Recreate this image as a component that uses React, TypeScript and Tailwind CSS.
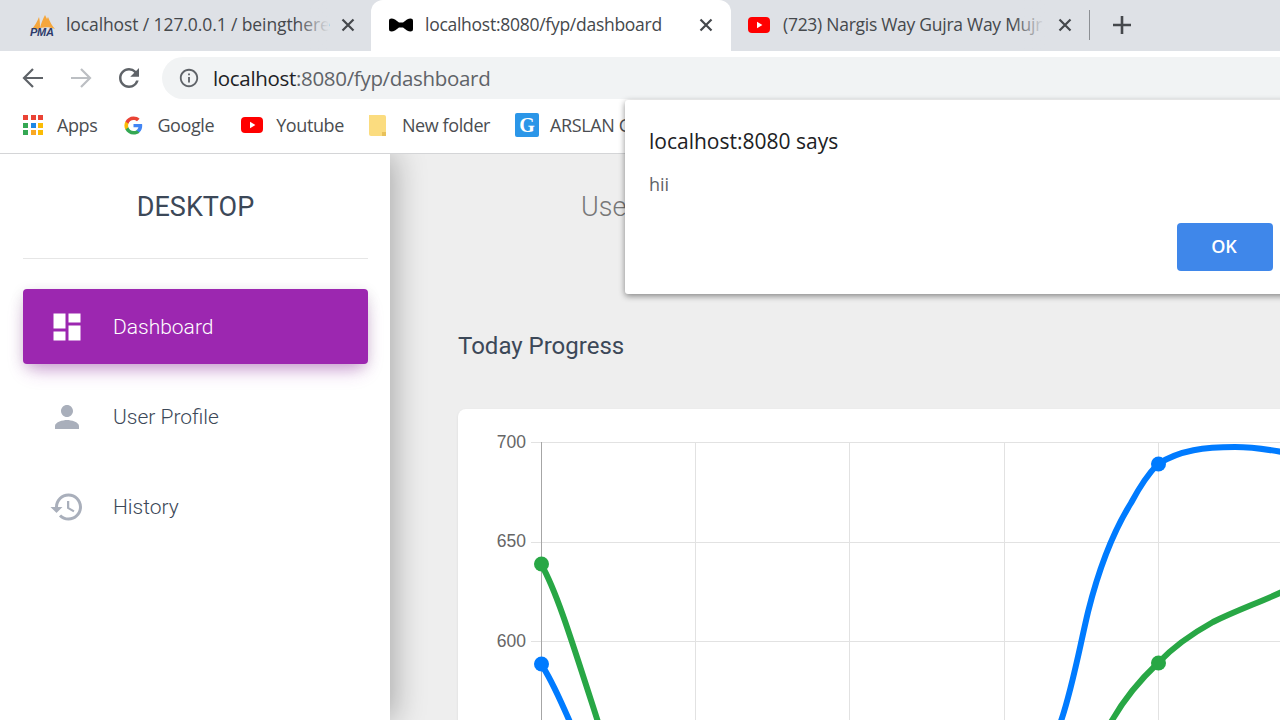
const UI = "font-['Open_Sans','Noto_Sans',sans-serif]";

const CloseIcon = () => (
  <svg width="14" height="14" viewBox="0 0 14 14" className="shrink-0">
    <path d="M1.500 1.500l11 11M12.500 1.500l-11 11" stroke="#45484c" strokeWidth="2.200" fill="none" />
  </svg>
);

const YoutubeIcon = () => (
  <svg width="22" height="16" viewBox="0 0 22 16" className="shrink-0">
    <rect width="22" height="16" rx="4" fill="#f00" />
    <path d="M9 4.800v6.400l5.400-3.200z" fill="#fff" />
  </svg>
);

const PmaIcon = () => (
  <div className="relative w-[26px] h-[22px] shrink-0">
    <svg width="26" height="16" viewBox="0 0 26 16" className="absolute top-0 left-0">
      <path d="M2 15C5 11 7 8 9 3c1 4 1 8 1 11l-2 1zM10 14c1-5 3-9 5-13l2 4 1-2c2 5 4 9 7 12-5-2-10-2-15-1z" fill="#f5a63c" />
    </svg>
    <span className="absolute left-0 bottom-[-2px] text-[11px] leading-none font-bold italic text-[#2d3a6b] font-['Liberation_Sans',sans-serif]">
      PMA
    </span>
  </div>
);

const BowTie = () => (
  <svg width="24" height="14" viewBox="0 0 24 14" className="shrink-0">
    <path d="M0 3C0 0 3 0 6 1.500L10 4.500h4L18 1.500C21 0 24 0 24 3v8c0 3-3 3-6 1.500L14 9.500h-4L6 12.500C3 14 0 14 0 11z" fill="#000" />
  </svg>
);

const AppsIcon = () => {
  const colors = ["#ea4335", "#ea4335", "#ea4335", "#34a853", "#1e88e5", "#fbbc05", "#34a853", "#f9a825", "#fbbc05"];
  return (
    <div className="grid grid-cols-3 gap-[2.500px] w-[20px] h-[20px] shrink-0">
      {colors.map((c, i) => (
        <svg key={i} width="5" height="5">
          <rect width="5" height="5" fill={c} />
        </svg>
      ))}
    </div>
  );
};

const GoogleIcon = () => (
  <svg width="19" height="19" viewBox="0 0 48 48" className="shrink-0">
    <path fill="#4285F4" d="M46 24.500c0-1.600-.1-3.100-.4-4.500H24v8.700h12.400c-.5 2.800-2.200 5.200-4.600 6.800v5.600h7.400C43.500 36.900 46 31.200 46 24.500z" />
    <path fill="#34A853" d="M24 47c6.200 0 11.400-2 15.200-5.500l-7.400-5.600c-2 1.400-4.700 2.200-7.800 2.200-6 0-11.100-4-12.900-9.500H3.500v5.800C7.300 41.900 15 47 24 47z" />
    <path fill="#FBBC05" d="M11.100 28.600c-.5-1.400-.7-2.900-.7-4.600s.3-3.200.7-4.600v-5.800H3.500C2 16.700 1 20.200 1 24s1 7.300 2.500 10.400z" />
    <path fill="#EA4335" d="M24 9.900c3.400 0 6.400 1.200 8.800 3.400l6.600-6.600C35.400 3.100 30.200 1 24 1 15 1 7.300 6.100 3.500 13.600l7.600 5.800C12.900 13.900 18 9.900 24 9.900z" />
  </svg>
);

const FolderIcon = () => (
  <svg width="20" height="23" viewBox="0 0 20 23" className="shrink-0">
    <path d="M1 1h15a2 2 0 0 1 2 2v19H3a2 2 0 0 1-2-2z" fill="#fbdc7f" />
    <path d="M14 22v-4h4v4z" fill="#e8c15a" />
  </svg>
);

const Bookmark = ({ icon, label, gap }: { icon: React.ReactNode; label: string; gap: string }) => (
  <div className={`flex items-center shrink-0 ${gap}`}>
    {icon}
    <span className="text-[18px] tracking-[-0.4px] text-[#4a4d51]">{label}</span>
  </div>
);

const NavItem = ({ d, label, active }: { d: string; label: string; active?: boolean }) => (
  <div
    className={`flex items-center h-[75px] pl-[26px] gap-[28px] rounded-[4px] ${
      active ? "bg-[#9c27b0] shadow-[0_10px_18px_-6px_rgba(156,39,176,0.45),0_3px_14px_rgba(0,0,0,0.12)]" : ""
    }`}
  >
    <svg width="36" height="36" viewBox="0 0 24 24" fill={active ? "#fff" : "#a9afbb"}>
      <path d={d} />
    </svg>
    <span className={`pt-[2px] text-[21px] font-light ${active ? "text-white" : "text-[#3c4858]"}`}>{label}</span>
  </div>
);

const Chart = () => (
  <svg width="822" height="311" viewBox="458 409 822 311" className="block">
    {[442.500, 542.500, 641.500].map((y) => (
      <line key={y} x1="531" x2="1280" y1={y} y2={y} stroke="#e2e2e2" strokeWidth="1" />
    ))}
    {[695.500, 849.500, 1004.500, 1158.500].map((x) => (
      <line key={x} x1={x} x2={x} y1="442" y2="720" stroke="#e2e2e2" strokeWidth="1" />
    ))}
    <line x1="541.500" x2="541.500" y1="442" y2="720" stroke="#a6a6a6" strokeWidth="1" />
    {[
      ["700", 448],
      ["650", 547],
      ["600", 647],
    ].map(([t, y]) => (
      <text key={t} x="526" y={y} textAnchor="end" fontSize="17.500" fill="#666" fontFamily="Liberation Sans, sans-serif">
        {t}
      </text>
    ))}
    <g fill="none" strokeWidth="6" stroke="#28a745">
      <path d="M541 564C556 590 570 635 598 722" />
      <path d="M1110 724C1122 702 1140 680 1158 663C1175 645 1195 632 1213 622C1235 611 1258 603 1282 592" />
    </g>
    <g fill="none" strokeWidth="6" stroke="#007bff">
      <path d="M541 664C552 680 560 700 570 722" />
      <path d="M1060 724C1072 690 1079 650 1088 612C1098 572 1113 532 1131 503C1139 488 1148 474 1158 464C1180 450 1205 447 1235 447C1250 447 1265 449 1282 452" />
    </g>
    <circle cx="541.500" cy="564" r="7.500" fill="#28a745" />
    <circle cx="541.500" cy="664" r="7.500" fill="#007bff" />
    <circle cx="1158.500" cy="464" r="7.500" fill="#007bff" />
    <circle cx="1158.500" cy="663" r="7.500" fill="#28a745" />
  </svg>
);

const App = () => {
  return (
    <div className={`relative w-[1280px] h-[720px] overflow-hidden bg-white flex flex-col ${UI}`}>
      {/* tabs */}
      <div className="flex items-center h-[51px] bg-[#dee1e6] shrink-0 text-[17.500px] tracking-[-0.27px] text-[#45484c]">
        <div className="relative flex items-center w-[371px] h-full pl-[30px] pr-[16px] pb-[2px] gap-[10px]">
          <PmaIcon />
          <span className="flex-1 whitespace-nowrap overflow-hidden tracking-[-0.1px]">localhost / 127.0.0.1 / beingthere</span>
          <div className="absolute left-[297px] top-0 w-[32px] h-full bg-gradient-to-r from-[#dee1e6]/0 to-[#dee1e6]" />
          <CloseIcon />
        </div>
        <div className="flex items-center w-[360px] h-full pl-[18px] pr-[18px] pb-[2px] gap-[12px] bg-white rounded-t-[12px]">
          <BowTie />
          <span className="flex-1 whitespace-nowrap overflow-hidden">localhost:8080/fyp/dashboard</span>
          <CloseIcon />
        </div>
        <div className="relative flex items-center w-[358px] h-full pl-[17px] pr-[17px] pb-[2px] gap-[13px]">
          <YoutubeIcon />
          <span className="whitespace-nowrap overflow-hidden flex-1">(723) Nargis Way Gujra Way Mujr</span>
          <div className="absolute left-[282px] top-0 w-[32px] h-full bg-gradient-to-r from-[#dee1e6]/0 to-[#dee1e6]" />
          <CloseIcon />
        </div>
        <div className="w-px h-[30px] mb-[2px] bg-[#8c8f94]" />
        <svg width="20" height="20" viewBox="0 0 20 20" className="ml-[22px] mb-[2px]">
          <path d="M10 1v18M1 10h18" stroke="#45484c" strokeWidth="2.600" />
        </svg>
      </div>

      {/* toolbar */}
      <div className="flex items-end h-[48px] shrink-0 bg-white">
        <div className="flex items-center h-[42px] pl-[21px] gap-[24px] w-[162px]">
          <svg width="24" height="24" viewBox="0 0 24 24" fill="none" stroke="#5f6368" strokeWidth="2.200" className="shrink-0">
            <path d="M22 12H3M12 3l-9 9 9 9" />
          </svg>
          <svg width="24" height="24" viewBox="0 0 24 24" fill="none" stroke="#bcbfc3" strokeWidth="2.200" className="shrink-0">
            <path d="M2 12h19M12 3l9 9-9 9" />
          </svg>
          <svg width="30" height="30" viewBox="0 0 24 24" fill="#5f6368" className="ml-[-3px] shrink-0">
            <path d="M17.650 6.350A7.958 7.958 0 0 0 12 4c-4.420 0-7.990 3.580-7.990 8s3.570 8 7.990 8c3.730 0 6.840-2.550 7.730-6h-2.080A5.990 5.990 0 0 1 12 18c-3.310 0-6-2.690-6-6s2.690-6 6-6c1.660 0 3.140.69 4.220 1.780L13 11h7V4l-2.350 2.350z" />
          </svg>
        </div>
        <div className="flex items-center flex-1 h-[42px] pl-[16px] gap-[13px] bg-[#f1f3f4] rounded-l-full">
          <svg width="22" height="22" viewBox="0 0 24 24" fill="#5f6368">
            <path d="M11 7h2v2h-2zm0 4h2v6h-2zm1-9C6.480 2 2 6.480 2 12s4.480 10 10 10 10-4.480 10-10S17.520 2 12 2zm0 18c-4.410 0-8-3.590-8-8s3.590-8 8-8 8 3.590 8 8-3.590 8-8 8z" />
          </svg>
          <span className="text-[20.500px] tracking-[-0.32px] text-[#5f6368] whitespace-nowrap">
            <span className="text-[#202124]">localhost</span>:8080/fyp/dashboard
          </span>
        </div>
      </div>

      {/* bookmarks */}
      <div className="flex items-center h-[55px] pl-[23px] pb-[2px] shrink-0 bg-white border-b border-[#d4d5d7] overflow-hidden">
        <Bookmark icon={<AppsIcon />} label="Apps" gap="gap-[14px]" />
        <div className="ml-[27px]">
          <Bookmark icon={<GoogleIcon />} label="Google" gap="gap-[14px]" />
        </div>
        <div className="ml-[27px]">
          <Bookmark icon={<YoutubeIcon />} label="Youtube" gap="gap-[13px]" />
        </div>
        <div className="ml-[24px]">
          <Bookmark icon={<FolderIcon />} label="New folder" gap="gap-[14px]" />
        </div>
        <div className="ml-[25px]">
          <Bookmark
            icon={
              <div className="flex items-center justify-center w-[24px] h-[24px] rounded-[2px] bg-[#2b96e8] text-white font-bold text-[20px] font-['Liberation_Serif',serif]">
                G
              </div>
            }
            label="ARSLAN G"
            gap="gap-[11px]"
          />
        </div>
      </div>

      {/* page */}
      <div className="flex flex-1 min-h-0 overflow-hidden bg-[#eeeeee] font-['Roboto',sans-serif]">
        <aside className="relative z-10 w-[390px] shrink-0 bg-white pl-[23px] pr-[22px] shadow-[4px_0_30px_rgba(0,0,0,0.3)]">
          <div className="flex items-center justify-center h-[105px] pt-[3px] border-b border-[#e6e6e6] text-[27px] text-[#3c4858]">
            DESKTOP
          </div>
          <div className="flex flex-col gap-[15px] mt-[30px]">
            <NavItem active label="Dashboard" d="M3 13h8V3H3v10zm0 8h8v-6H3v6zm10 0h8V11h-8v10zm0-18v6h8V3h-8z" />
            <NavItem
              label="User Profile"
              d="M12 12c2.210 0 4-1.790 4-4s-1.790-4-4-4-4 1.790-4 4 1.790 4 4 4zm0 2c-2.670 0-8 1.340-8 4v2h16v-2c0-2.660-5.330-4-8-4z"
            />
            <NavItem
              label="History"
              d="M13 3c-4.970 0-9 4.030-9 9H1l3.890 3.890.07.140L9 12H6c0-3.870 3.130-7 7-7s7 3.130 7 7-3.130 7-7 7c-1.930 0-3.680-.790-4.940-2.060l-1.420 1.420C8.270 19.990 10.510 21 13 21c4.970 0 9-4.030 9-9s-4.030-9-9-9zm-1 5v5l4.280 2.540.720-1.210-3.500-2.080V8H12z"
            />
          </div>
        </aside>
        <main className="flex-1 min-w-0 pl-[68px]">
          <h1 className="ml-[123px] mt-[35px] h-[36px] leading-[36px] text-[27px] font-light text-[#777]">User</h1>
          <h2 className="mt-[105px] h-[32px] leading-[32px] text-[24px] text-[#3c4858]">Today Progress</h2>
          <div className="mt-[47px] w-[1000px] h-[400px] bg-white rounded-[8px] shadow-[0_1px_3px_rgba(0,0,0,0.08)]">
            <Chart />
          </div>
        </main>
      </div>

      {/* alert */}
      <div className="absolute z-20 left-[625px] top-[100px] w-[672px] h-[194px] bg-white rounded-[3px] pl-[24px] pr-[24px] flex flex-col shadow-[0_2px_6px_rgba(0,0,0,0.45)]">
        <div className="mt-[26px] text-[21px] leading-[30px] text-[#202124]">localhost:8080 says</div>
        <div className="mt-[15px] text-[18px] leading-[26px] text-[#5f6368]">hii</div>
        <div className="flex justify-end mt-[26px]">
          <button className="w-[96px] h-[48px] pb-[2px] pr-[2px] rounded-[4px] bg-[#3f87ea] text-white text-[18px] font-semibold">OK</button>
        </div>
      </div>
    </div>
  );
};

export default App;
